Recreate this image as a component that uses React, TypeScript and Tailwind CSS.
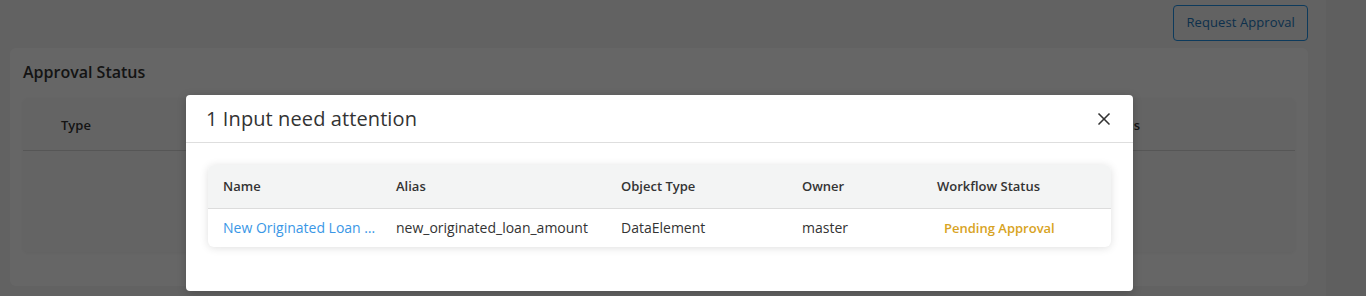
import { X } from "lucide-react";

interface Row {
  name: string;
  alias: string;
  objectType: string;
  owner: string;
  status: string;
}

const rows: Row[] = [
  {
    name: "New Originated Loan Amount",
    alias: "new_originated_loan_amount",
    objectType: "DataElement",
    owner: "master",
    status: "Pending Approval",
  },
];

const AttentionModal = () => {
  return (
    <div className="absolute left-[186px] top-[95px] w-[947px] h-[196px] bg-white rounded-[4px] shadow-[0_2px_10px_rgba(0,0,0,0.2)] flex flex-col">
      <div className="h-[48px] flex items-center justify-between pl-[20px] pr-[19px] border-b border-[#dedede]">
        <h2 className="text-[20px] text-[#333] font-normal tracking-[0.1px]">1 Input need attention</h2>
        <button className="text-[#333]">
          <X size={20} strokeWidth={2} />
        </button>
      </div>

      <div className="px-[22px] pt-[22px]">
        <div className="rounded-[6px] overflow-hidden shadow-[0_1px_8px_rgba(0,0,0,0.13)]">
          <table className="w-full text-left table-fixed border-collapse">
            <thead>
              <tr className="bg-[#f3f4f4] border-b border-[#dcdcdc] h-[43px] text-[13px] font-semibold text-[#333]">
                <th className="pl-[15px] pt-[1px] w-[188px] font-semibold">Name</th>
                <th className="w-[225px] pt-[1px] font-semibold">Alias</th>
                <th className="w-[181px] pt-[1px] font-semibold">Object Type</th>
                <th className="w-[135px] pt-[1px] font-semibold">Owner</th>
                <th className="pt-[1px] font-semibold">Workflow Status</th>
              </tr>
            </thead>
            <tbody>
              {rows.map((row) => (
                <tr key={row.alias} className="h-[39px] text-[14px] text-[#333]">
                  <td className="pl-[15px] pr-[12px]">
                    <a className="block truncate text-[#3a97e6]">{row.name}</a>
                  </td>
                  <td>{row.alias}</td>
                  <td>{row.objectType}</td>
                  <td>{row.owner}</td>
                  <td>
                    <span className="pl-[7px] text-[13px] font-semibold text-[#d8a323]">{row.status}</span>
                  </td>
                </tr>
              ))}
            </tbody>
          </table>
        </div>
      </div>
    </div>
  );
};

export default function App() {
  return (
    <div className="relative h-[296px] w-full overflow-hidden bg-[#f5f5f5] flex font-['Open_Sans',sans-serif]">
      <main className="flex-1 pl-[10px] pr-[18px] pt-[5px]">
        <div className="flex justify-end">
          <button className="h-[36px] px-[12px] border border-[#2191e6] rounded-[4px] text-[13px] text-[#2378bd] tracking-[0.1px]">
            Request Approval
          </button>
        </div>

        <section className="mt-[7px] h-[238px] bg-white rounded-[6px] px-[13px] pt-[12px]">
          <h3 className="text-[16px] font-semibold text-[#333] leading-[24px]">Approval Status</h3>
          <div className="mt-[14px] h-[154px] rounded-[6px] bg-[#fbfbfb] shadow-[0_1px_4px_rgba(0,0,0,0.06)]">
            <div className="h-[53px] flex items-center pt-[4px] border-b border-[#d6d6d6] text-[13px] font-semibold text-[#333]">
              <span className="pl-[38px]">Type</span>
              <span className="ml-auto pr-[155px]">Workflow Status</span>
            </div>
          </div>
        </section>
      </main>
      <aside className="w-[40px] bg-[#eeeeee]" />

      <div className="absolute inset-0 bg-black/60" />
      <AttentionModal />
    </div>
  );
}
